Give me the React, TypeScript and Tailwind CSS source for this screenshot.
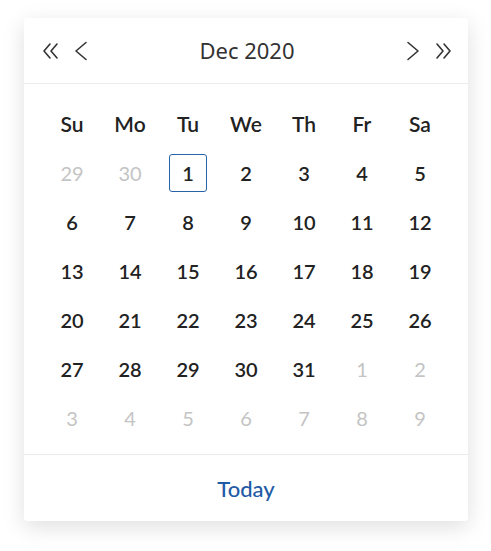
import React from 'react';

const WEEKDAYS = ['Su', 'Mo', 'Tu', 'We', 'Th', 'Fr', 'Sa'];

type Day = { n: number; muted?: boolean; selected?: boolean };

function buildDays(): Day[] {
  const days: Day[] = [{ n: 29, muted: true }, { n: 30, muted: true }];
  for (let i = 1; i <= 31; i++) days.push({ n: i, selected: i === 1 });
  for (let i = 1; i <= 9; i++) days.push({ n: i, muted: true });
  return days;
}

function Chevron({ dir, double }: { dir: 'left' | 'right'; double?: boolean }) {
  const flip = dir === 'right' ? 'scale(-1,1) translate(-18,0)' : undefined;
  return (
    <svg width="18" height="20" viewBox="0 0 18 20" fill="none" stroke="#333" strokeWidth="1.6" strokeLinecap="round" strokeLinejoin="round">
      <g transform={flip}>
        {double ? (
          <>
            <path d="M8 3 L2 10 L8 17" />
            <path d="M15 3 L9 10 L15 17" />
          </>
        ) : (
          <path d="M14 1.5 L4 10 L14 18.5" />
        )}
      </g>
    </svg>
  );
}

export default function App() {
  const days = buildDays();
  return (
    <div className="min-h-[551px] w-[491px] bg-white pt-[18px] pl-[24px]" style={{ fontFamily: 'Lato, "Noto Sans", sans-serif' }}>
      <div className="flex h-[503px] w-[444px] flex-col rounded-[3px] bg-white shadow-[0_6px_22px_rgba(0,0,0,0.13)]">
        <div className="flex h-[66px] items-center justify-between border-b border-[#ececec] pr-[16px] pl-[18px]">
          <div className="flex items-center gap-[12px]">
            <button type="button" className="flex"><Chevron dir="left" double /></button>
            <button type="button" className="flex"><Chevron dir="left" /></button>
          </div>
          <span className="text-[22px] text-[#333]" style={{ fontFamily: '"Noto Sans", Lato, sans-serif' }}>Dec 2020</span>
          <div className="flex items-center gap-[12px]">
            <button type="button" className="flex"><Chevron dir="right" /></button>
            <button type="button" className="flex"><Chevron dir="right" double /></button>
          </div>
        </div>

        <div className="grid grid-cols-7 px-[19px] pt-[15px] pb-[12px]">
          {WEEKDAYS.map((d) => (
            <div key={d} className="flex h-[49px] items-center justify-center text-[21px] font-semibold text-[#222]">
              {d}
            </div>
          ))}
          {days.map((d, i) => (
            <div key={i} className="flex h-[49px] items-center justify-center">
              <span
                className={
                  d.selected
                    ? 'flex h-[38px] w-[38px] items-center justify-center rounded-[3px] border-[1.5px] border-[#2a64a8] text-[20px] font-semibold text-[#222]'
                    : d.muted
                      ? 'text-[20px] text-[#c4c4c4]'
                      : 'text-[20px] font-semibold text-[#222]'
                }
              >
                {d.n}
              </span>
            </div>
          ))}
        </div>

        <div className="flex flex-1 items-center justify-center border-t border-[#ececec]">
          <button type="button" className="text-[22px] font-medium text-[#1f5aa6]">Today</button>
        </div>
      </div>
    </div>
  );
}
